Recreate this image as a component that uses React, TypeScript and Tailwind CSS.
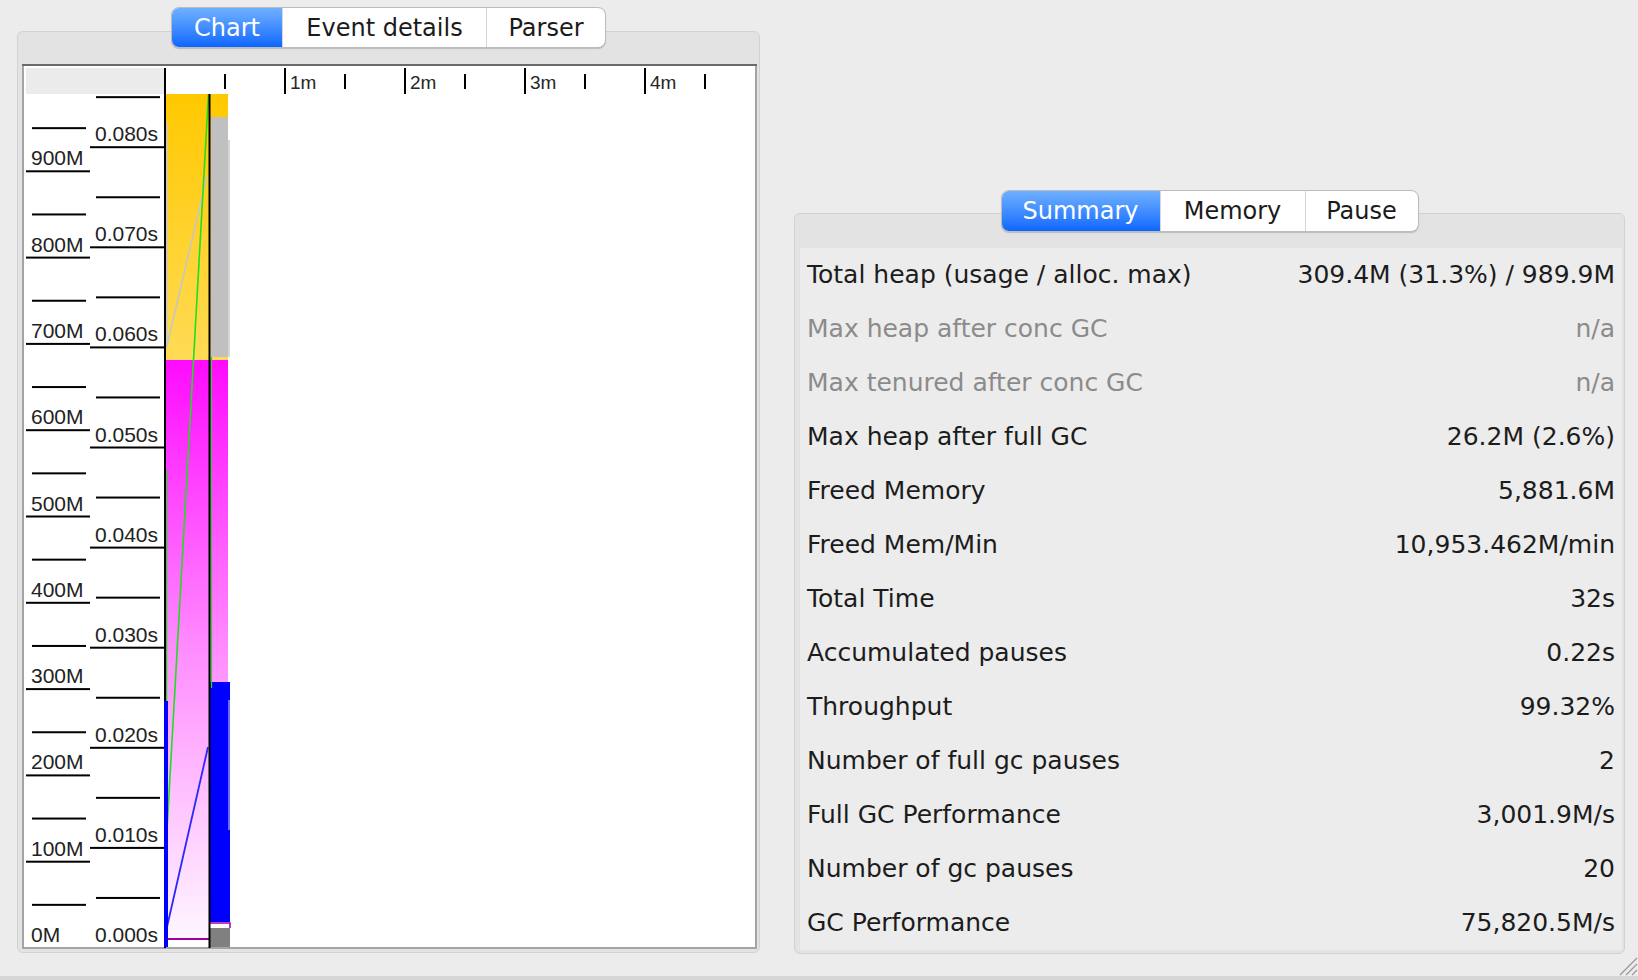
import React from 'react';

type Tab = { label: string; w: string; active?: boolean };

const font = { fontFamily: '"DejaVu Sans", "Liberation Sans", sans-serif' };

const TabBar: React.FC<{ tabs: Tab[]; h: string }> = ({ tabs, h }) => (
  <div
    className={`relative z-10 flex ${h} rounded-[8px] border border-[#bcbcbc] bg-white shadow-[0_1px_1px_rgba(0,0,0,0.18)] overflow-hidden`}
  >
    {tabs.map((t, i) => (
      <div
        key={t.label}
        className={`${t.w} flex items-center justify-center text-[24px] ${
          t.active
            ? 'bg-gradient-to-b from-[#6fb0ff] to-[#0b66ff] text-white'
            : 'text-[#1b1b1b]'
        } ${i > 0 ? 'border-l border-[#d6d6d6]' : ''}`}
      >
        {t.label}
      </div>
    ))}
  </div>
);

const MB = 86.3;
const SEC = 100.1;
const BOTTOM = 948;

const GcChart: React.FC = () => {
  const mem = Array.from({ length: 10 }, (_, i) => i);
  const time = Array.from({ length: 9 }, (_, i) => i);
  const majors = [285, 405, 525, 645];
  const minors = [225, 345, 465, 585, 705];
  return (
    <svg width={735} height={885} className="block">
      <defs>
        <linearGradient id="yel" x1="0" y1="0" x2="0" y2="1">
          <stop offset="0" stopColor="#ffc800" />
          <stop offset="1" stopColor="#ffdb55" />
        </linearGradient>
        <linearGradient id="mag" x1="0" y1="0" x2="0" y2="1">
          <stop offset="0" stopColor="#ff0aff" />
          <stop offset="0.5" stopColor="#ff8cff" />
          <stop offset="1" stopColor="#fff6ff" />
        </linearGradient>
      </defs>
      <g transform="translate(-22,-64)" fontFamily='"Liberation Sans", Arial, sans-serif'>
        {/* frame */}
        <rect x={22} y={64} width={735} height={885} fill="#a4a4a4" />
        <rect x={24} y={66} width={731} height={881} fill="#ffffff" />
        <rect x={22} y={64} width={735} height={2} fill="#6a6a6a" />
        <rect x={26} y={68} width={138} height={26} fill="#ebebeb" />

        {/* time header */}
        {majors.map((x, i) => (
          <g key={x}>
            <rect x={x - 1} y={68} width={2} height={26} fill="#000" />
            <text x={x + 5} y={88.5} fontSize={19} fill="#262626">
              {i + 1}m
            </text>
          </g>
        ))}
        {minors.map((x) => (
          <rect key={x} x={x - 1} y={74} width={2} height={15} fill="#000" />
        ))}

        {/* memory axis */}
        {mem.map((m) => {
          const y = BOTTOM - m * MB;
          const yh = BOTTOM - (m + 0.5) * MB;
          return (
            <g key={m}>
              {m > 0 && <rect x={26} y={y - 1} width={64} height={2} fill="#000" />}
              <rect x={32} y={yh - 1} width={54} height={2} fill="#000" />
              <text x={31} y={y - 6} fontSize={21} fill="#222">
                {m * 100}M
              </text>
            </g>
          );
        })}

        {/* time axis */}
        {time.map((k) => {
          const y = BOTTOM - k * SEC;
          const yh = BOTTOM - (k + 0.5) * SEC;
          return (
            <g key={k}>
              {k > 0 && <rect x={90} y={y - 1} width={74} height={2} fill="#000" />}
              <rect x={96} y={yh - 1} width={64} height={2} fill="#000" />
              <text x={95} y={y - 6} fontSize={21} fill="#222">
                {`0.0${k}0s`}
              </text>
            </g>
          );
        })}

        {/* data */}
        <rect x={166} y={94} width={62} height={266} fill="url(#yel)" />
        <rect x={166} y={360} width={62} height={579} fill="url(#mag)" />
        <rect x={211} y={117} width={17} height={240} fill="#c0c0c0" />
        <rect x={228} y={140} width={2} height={217} fill="#d6d6d6" />
        <rect x={210} y={682} width={20} height={240} fill="#0000ff" />
        <rect x={228} y={700} width={2} height={130} fill="#6b6bff" />
        <rect x={210} y={922} width={20} height={6} fill="#ffffff" />
        <rect x={210} y={928} width={20} height={19} fill="#808080" />
        <polyline points="210,923 230,923 230,928" fill="none" stroke="#a000a0" strokeWidth={1.5} />
        <rect x={166} y={938} width={43} height={2} fill="#a000a0" />

        <line x1={167} y1={123} x2={167} y2={347} stroke="#c8c8c8" strokeWidth={1.5} />
        <line x1={206.7} y1={177} x2={166.7} y2={347} stroke="#c6c6c6" strokeWidth={1.6} />
        <line x1={208.5} y1={94} x2={167} y2={830} stroke="#1fe01f" strokeWidth={1.6} />
        <line x1={166.5} y1={470} x2={166.5} y2={702} stroke="#30d030" strokeWidth={1.5} />
        <line x1={211.5} y1={357} x2={211.5} y2={688} stroke="#30d030" strokeWidth={1.3} />
        <line x1={167} y1={927} x2={208} y2={747} stroke="#2828ff" strokeWidth={1.8} />

        {/* axis lines */}
        <rect x={164} y={68} width={2} height={880} fill="#000" />
        <rect x={208.5} y={94} width={2} height={854} fill="#000" />
        <rect x={164} y={701} width={4} height={246} fill="#0000ff" />
      </g>
    </svg>
  );
};

const rows: { label: string; value: string; muted?: boolean }[] = [
  { label: 'Total heap (usage / alloc. max)', value: '309.4M (31.3%) / 989.9M' },
  { label: 'Max heap after conc GC', value: 'n/a', muted: true },
  { label: 'Max tenured after conc GC', value: 'n/a', muted: true },
  { label: 'Max heap after full GC', value: '26.2M (2.6%)' },
  { label: 'Freed Memory', value: '5,881.6M' },
  { label: 'Freed Mem/Min', value: '10,953.462M/min' },
  { label: 'Total Time', value: '32s' },
  { label: 'Accumulated pauses', value: '0.22s' },
  { label: 'Throughput', value: '99.32%' },
  { label: 'Number of full gc pauses', value: '2' },
  { label: 'Full GC Performance', value: '3,001.9M/s' },
  { label: 'Number of gc pauses', value: '20' },
  { label: 'GC Performance', value: '75,820.5M/s' },
];

const App: React.FC = () => {
  return (
    <div className="w-[1638px] h-[980px] bg-[#ececec] flex flex-col overflow-hidden relative" style={font}>
      <div className="h-[976px] flex">
        {/* left: chart */}
        <div className="ml-[17px] w-[743px] flex flex-col items-center pt-[7px]">
          <TabBar
            h="h-[41px]"
            tabs={[
              { label: 'Chart', w: 'w-[110px]', active: true },
              { label: 'Event details', w: 'w-[204px]' },
              { label: 'Parser', w: 'w-[119px]' },
            ]}
          />
          <div className="-mt-[17px] w-[743px] h-[922px] rounded-[6px] border border-[#d2d2d2] bg-[#e3e3e3] pt-[32px] pl-[4px] pr-[2px] pb-[3px]">
            <GcChart />
          </div>
        </div>

        {/* right: summary */}
        <div className="ml-[34px] w-[831px] flex flex-col items-center pt-[190px]">
          <TabBar
            h="h-[42px]"
            tabs={[
              { label: 'Summary', w: 'w-[158px]', active: true },
              { label: 'Memory', w: 'w-[145px]' },
              { label: 'Pause', w: 'w-[113px]' },
            ]}
          />
          <div className="-mt-[19px] w-[831px] h-[741px] rounded-[6px] border border-[#d2d2d2] bg-[#e3e3e3] pt-[34px] pl-[5px] pr-[2px] pb-[3px]">
            <div className="w-[822px] h-[702px] bg-[#ececec] flex flex-col">
              {rows.map((r) => (
                <div
                  key={r.label}
                  className={`h-[54px] flex items-center justify-between pl-[7px] pr-[7px] text-[25px] ${
                    r.muted ? 'text-[#8b8b8b]' : 'text-[#1c1c1c]'
                  }`}
                >
                  <span>{r.label}</span>
                  <span>{r.value}</span>
                </div>
              ))}
            </div>
          </div>
        </div>
      </div>
      <div className="h-[4px] bg-[#d6d6d6]" />
      <svg className="absolute right-0 bottom-[4px]" width={20} height={20}>
        <line x1={2} y1={19} x2={19} y2={2} stroke="#9a9a9a" strokeWidth={1.2} />
        <line x1={8} y1={19} x2={19} y2={8} stroke="#9a9a9a" strokeWidth={1.2} />
        <line x1={14} y1={19} x2={19} y2={14} stroke="#9a9a9a" strokeWidth={1.2} />
      </svg>
    </div>
  );
};

export default App;
